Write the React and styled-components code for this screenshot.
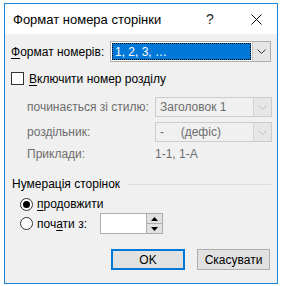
import React from 'react';
import styled, { createGlobalStyle } from 'styled-components';

const GlobalStyle = createGlobalStyle`
  html, body {
    margin: 0;
    background: #ffffff;
  }
  body {
    font-family: "Liberation Sans", Arial, sans-serif;
    font-size: 12px;
    color: #000;
  }
`;

const Page = styled.div`
  padding: 3px 0 0 4px;
`;

const Dialog = styled.div`
  width: 274px;
  height: 281px;
  box-sizing: border-box;
  border: 1px solid #1883d7;
  display: flex;
  flex-direction: column;
`;

const TitleBar = styled.div`
  height: 30px;
  background: #fff;
  display: flex;
  align-items: center;
  padding-left: 8px;
`;

const Title = styled.div`
  flex: 1;
  font-size: 13px;
`;

const Help = styled.div`
  width: 20px;
  font-size: 14px;
  color: #222;
  margin-right: 25px;
`;

const Close = styled.div`
  width: 26px;
  display: flex;
  align-items: center;
`;

const Body = styled.div`
  flex: 1;
  background: #f0f0f0;
  display: flex;
  flex-direction: column;
`;

const Row = styled.div`
  display: flex;
  align-items: center;
  height: ${p => p.h || 16}px;
  margin-top: ${p => p.mt || 0}px;
  padding-left: ${p => p.pl || 0}px;
`;

const Label = styled.div`
  width: ${p => (p.w ? `${p.w}px` : 'auto')};
  flex-shrink: 0;
  color: ${p => (p.disabled ? '#6d6d6d' : '#000')};
  white-space: nowrap;
`;

const U = styled.span`
  text-decoration: underline;
  text-underline-offset: 2px;
`;

const Select = styled.div`
  width: ${p => p.w}px;
  height: ${p => p.h}px;
  flex-shrink: 0;
  box-sizing: border-box;
  border: 1px solid ${p => (p.disabled ? '#cccccc' : '#adadad')};
  background: ${p => (p.disabled ? '#f0f0f0' : '#fff')};
  display: flex;
`;

const SelectValue = styled.div`
  flex: 1;
  display: flex;
  align-items: center;
  padding-left: ${p => (p.active ? 3 : 4)}px;
  margin: ${p => (p.active ? '1px' : '0')};
  background: ${p => (p.active ? '#0078d7' : 'transparent')};
  outline: ${p => (p.active ? '1px dotted #000' : 'none')};
  outline-offset: -1px;
  color: ${p => (p.active ? '#fff' : '#6d6d6d')};
  white-space: pre;
`;

const DropButton = styled.div`
  width: 17px;
  display: flex;
  align-items: center;
  justify-content: center;
  background: ${p => (p.disabled ? '#e6e6e6' : '#e5e5e5')};
  border-left: 1px solid ${p => (p.disabled ? '#d2d2d2' : '#c4c4c4')};
`;

const CheckBox = styled.div`
  width: 13px;
  height: 13px;
  box-sizing: border-box;
  border: 1px solid #333;
  background: #fff;
  margin-right: 5px;
`;

const Radio = styled.div`
  width: 13px;
  height: 13px;
  box-sizing: border-box;
  border: 1px solid #333;
  border-radius: 50%;
  background: #fff;
  margin-right: 4px;
  display: flex;
  align-items: center;
  justify-content: center;
  &::after {
    content: '';
    display: ${p => (p.checked ? 'block' : 'none')};
    width: 7px;
    height: 7px;
    border-radius: 50%;
    background: #000;
  }
`;

const GroupLine = styled.div`
  flex: 1;
  height: 1px;
  background: #dcdcdc;
  margin: 0 6px 0 8px;
`;

const Spin = styled.div`
  width: 63px;
  height: 21px;
  box-sizing: border-box;
  border: 1px solid #adadad;
  background: #fff;
  display: flex;
  justify-content: flex-end;
`;

const SpinButtons = styled.div`
  width: 15px;
  display: flex;
  flex-direction: column;
  border-left: 1px solid #adadad;
`;

const SpinButton = styled.div`
  flex: 1;
  background: #e1e1e1;
  display: flex;
  align-items: center;
  justify-content: center;
  & + & {
    border-top: 1px solid #adadad;
  }
`;

const Buttons = styled.div`
  display: flex;
  justify-content: flex-end;
  gap: 12px;
  margin-top: 15px;
  padding-right: 7px;
`;

const Button = styled.div`
  width: ${p => p.w}px;
  height: 21px;
  box-sizing: border-box;
  background: #e1e1e1;
  border: ${p => (p.primary ? '2px solid #0078d7' : '1px solid #adadad')};
  display: flex;
  align-items: center;
  justify-content: center;
`;

const Chevron = ({ color }) => (
  <svg width="9" height="5" viewBox="0 0 9 5">
    <path d="M0.5 0.5 L4.5 4.5 L8.5 0.5" fill="none" stroke={color} strokeWidth="1" />
  </svg>
);

const Triangle = ({ up }) => (
  <svg width="7" height="4" viewBox="0 0 7 4">
    <path d={up ? 'M0 4 L3.5 0 L7 4 Z' : 'M0 0 L3.5 4 L7 0 Z'} fill="#000" />
  </svg>
);

const App = () => {
  return (
    <>
      <GlobalStyle />
      <Page>
        <Dialog>
          <TitleBar>
            <Title>Формат номера сторінки</Title>
            <Help>?</Help>
            <Close>
              <svg width="11" height="11" viewBox="0 0 11 11">
                <path d="M0.5 0.5 L10.5 10.5 M10.5 0.5 L0.5 10.5" stroke="#000" strokeWidth="1" />
              </svg>
            </Close>
          </TitleBar>
          <Body>
            <Row h={21} mt={7} pl={6}>
              <Label w={99}><U>Ф</U>ормат номерів:</Label>
              <Select w={161} h={21}>
                <SelectValue active>1, 2, 3, …</SelectValue>
                <DropButton><Chevron color="#333" /></DropButton>
              </Select>
            </Row>
            <Row h={13} mt={10} pl={6}>
              <CheckBox />
              <Label><U>В</U>ключити номер розділу</Label>
            </Row>
            <Row h={20} mt={12} pl={22}>
              <Label w={128} disabled>починається зі стилю:</Label>
              <Select w={117} h={20} disabled>
                <SelectValue>Заголовок 1</SelectValue>
                <DropButton disabled><Chevron color="#bfbfbf" /></DropButton>
              </Select>
            </Row>
            <Row h={20} mt={5} pl={22}>
              <Label w={128} disabled>роздільник:</Label>
              <Select w={117} h={20} disabled>
                <SelectValue>{'-     (дефіс)'}</SelectValue>
                <DropButton disabled><Chevron color="#bfbfbf" /></DropButton>
              </Select>
            </Row>
            <Row mt={4} pl={22}>
              <Label w={128} disabled>Приклади:</Label>
              <Label disabled>1-1, 1-A</Label>
            </Row>
            <Row mt={14} pl={7}>
              <Label>Нумерація сторінок</Label>
              <GroupLine />
            </Row>
            <Row mt={4} pl={15}>
              <Radio checked />
              <Label><U>п</U>родовжити</Label>
            </Row>
            <Row h={21} mt={1} pl={15}>
              <Radio />
              <Label w={63}>поч<U>а</U>ти з:</Label>
              <Spin>
                <SpinButtons>
                  <SpinButton><Triangle up /></SpinButton>
                  <SpinButton><Triangle /></SpinButton>
                </SpinButtons>
              </Spin>
            </Row>
            <Buttons>
              <Button w={74} primary>OK</Button>
              <Button w={73}>Скасувати</Button>
            </Buttons>
          </Body>
        </Dialog>
      </Page>
    </>
  );
};

export default App;
